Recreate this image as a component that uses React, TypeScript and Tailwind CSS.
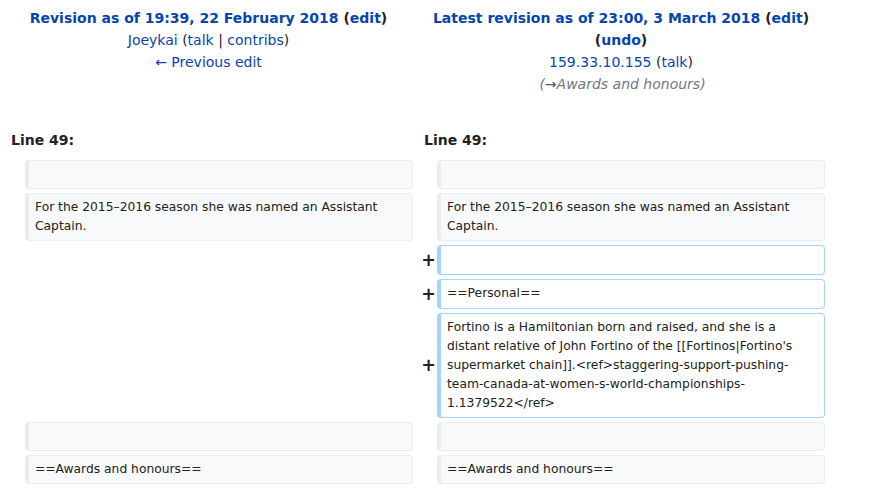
import React from "react";

const font = { fontFamily: '"DejaVu Sans", sans-serif' };

type Row =
  | { kind: "context"; left: string; right: string }
  | { kind: "added"; right: string };

const rows: Row[] = [
  { kind: "context", left: "", right: "" },
  {
    kind: "context",
    left: "For the 2015–2016 season she was named an Assistant Captain.",
    right: "For the 2015–2016 season she was named an Assistant Captain.",
  },
  { kind: "added", right: "" },
  { kind: "added", right: "==Personal==" },
  {
    kind: "added",
    right:
      "Fortino is a Hamiltonian born and raised, and she is a distant relative of John Fortino of the [[Fortinos|Fortino's supermarket chain]].<ref>staggering-support-pushing-team-canada-at-women-s-world-championships-1.1379522</ref>",
  },
  { kind: "context", left: "", right: "" },
  { kind: "context", left: "==Awards and honours==", right: "==Awards and honours==" },
];

function ContextBox({ text }: { text: string }) {
  return (
    <div className="min-h-[29px] rounded-[4px] border border-l-4 border-[#eaecf0] bg-[#f8f9fa] px-[6px] py-[4px] text-[12.3px] leading-[19px] text-[#222] break-words">
      {text}
    </div>
  );
}

function AddedBox({ text }: { text: string }) {
  return (
    <div className="min-h-[29px] rounded-[4px] border border-l-4 border-[#a3d3ff] bg-white px-[6px] py-[4px] text-[12.3px] leading-[19px] text-[#222] break-words">
      {text}
    </div>
  );
}

export default function App() {
  return (
    <div className="min-h-[488px] w-[874px] bg-white text-[#222]" style={font}>
      <div className="grid grid-cols-[17px_388px_16px_388px] gap-x-[4px] gap-y-[4px] pl-[4px]">
        {/* titles */}
        <div className="col-span-2 pt-[7px] text-center text-[14px] leading-[22px]">
          <div className="font-bold">
            <span className="text-[#0645ad]">Revision as of 19:39, 22 February 2018</span>{" "}
            (<span className="text-[#0645ad]">edit</span>)
          </div>
          <div>
            <span className="text-[#0645ad]">Joeykai</span> (
            <span className="text-[#0645ad]">talk</span> |{" "}
            <span className="text-[#0645ad]">contribs</span>)
          </div>
          <div className="text-[#0645ad]">← Previous edit</div>
        </div>
        <div className="col-span-2 pt-[7px] text-center text-[14px] leading-[22px]">
          <div className="font-bold">
            <span className="text-[#0645ad]">Latest revision as of 23:00, 3 March 2018</span>{" "}
            (<span className="text-[#0645ad]">edit</span>)
          </div>
          <div className="font-bold">
            (<span className="text-[#0645ad]">undo</span>)
          </div>
          <div>
            <span className="text-[#0645ad]">159.33.10.155</span> (
            <span className="text-[#0645ad]">talk</span>)
          </div>
          <div className="pl-[3px] italic text-[#72777d]">
            (<span className="text-[#54595d]">→</span>Awards and honours)
          </div>
        </div>

        {/* line numbers */}
        <div className="col-span-2 pb-[5px] pl-[7px] pt-[30px] text-[14px] font-bold leading-[22px]">
          Line 49:
        </div>
        <div className="col-span-2 pb-[5px] pl-[7px] pt-[30px] text-[14px] font-bold leading-[22px]">
          Line 49:
        </div>

        {rows.map((r, i) =>
          r.kind === "context" ? (
            <React.Fragment key={i}>
              <div />
              <ContextBox text={r.left} />
              <div />
              <ContextBox text={r.right} />
            </React.Fragment>
          ) : (
            <React.Fragment key={i}>
              <div />
              <div />
              <div className="-mr-[3px] flex min-h-[30px] items-center justify-end pt-[1px] text-[17.5px] font-bold leading-none">
                +
              </div>
              <AddedBox text={r.right} />
            </React.Fragment>
          )
        )}
      </div>
    </div>
  );
}
